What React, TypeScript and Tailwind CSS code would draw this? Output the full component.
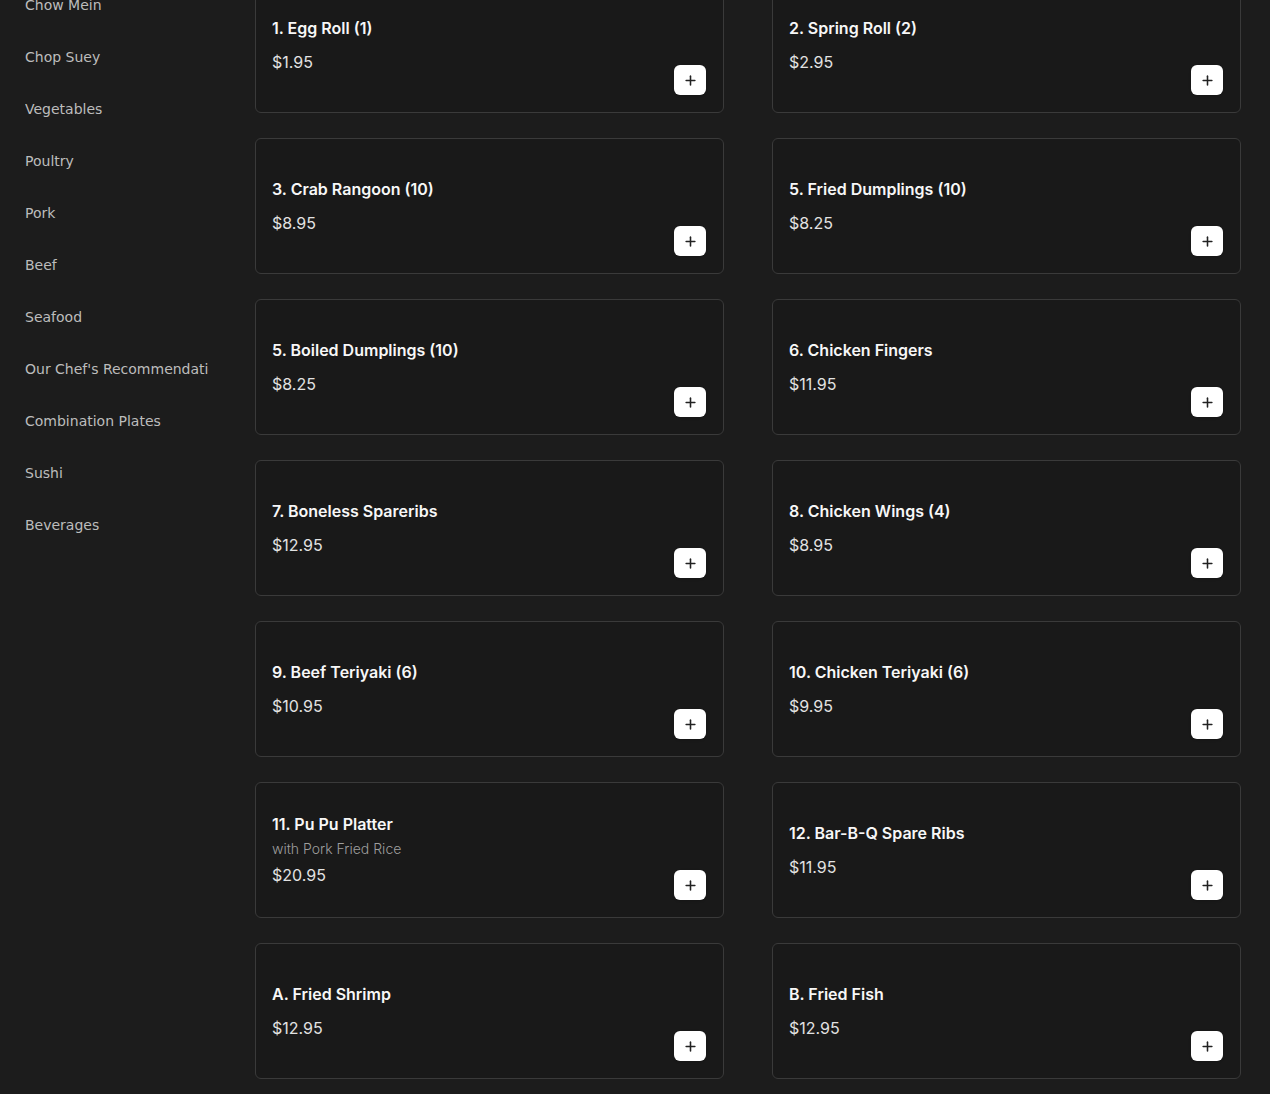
import React from 'react';
import { Plus } from 'lucide-react';

const categories = [
  'Chow Mein',
  'Chop Suey',
  'Vegetables',
  'Poultry',
  'Pork',
  'Beef',
  'Seafood',
  "Our Chef's Recommendations",
  'Combination Plates',
  'Sushi',
  'Beverages',
];

type Item = { name: string; price: string; note?: string };

const items: Item[] = [
  { name: '1. Egg Roll (1)', price: '$1.95' },
  { name: '2. Spring Roll (2)', price: '$2.95' },
  { name: '3. Crab Rangoon (10)', price: '$8.95' },
  { name: '5. Fried Dumplings (10)', price: '$8.25' },
  { name: '5. Boiled Dumplings (10)', price: '$8.25' },
  { name: '6. Chicken Fingers', price: '$11.95' },
  { name: '7. Boneless Spareribs', price: '$12.95' },
  { name: '8. Chicken Wings (4)', price: '$8.95' },
  { name: '9. Beef Teriyaki (6)', price: '$10.95' },
  { name: '10. Chicken Teriyaki (6)', price: '$9.95' },
  { name: '11. Pu Pu Platter', price: '$20.95', note: 'with Pork Fried Rice' },
  { name: '12. Bar-B-Q Spare Ribs', price: '$11.95' },
  { name: 'A. Fried Shrimp', price: '$12.95' },
  { name: 'B. Fried Fish', price: '$12.95' },
];

function MenuCard({ item }: { item: Item }) {
  return (
    <div className="h-[136px] rounded-md border border-[#3a3a3a] bg-[#191919] flex justify-between pl-4 pr-[17px] pt-4 pb-[17px]">
      <div className="self-center flex flex-col">
        <div className="text-base leading-6 font-semibold text-[#f7f7f7]">{item.name}</div>
        {item.note ? (
          <>
            <div className="mt-[3px] text-sm leading-5 font-light text-[#9e9e9e]">{item.note}</div>
            <div className="mt-[4px] text-base leading-6 text-[#e2e2e2]">{item.price}</div>
          </>
        ) : (
          <div className="mt-[10px] text-base leading-6 text-[#e2e2e2]">{item.price}</div>
        )}
      </div>
      <button className="self-end w-8 h-[30px] rounded-md bg-white flex items-center justify-center shadow-sm">
        <Plus size={15} strokeWidth={2.5} className="text-[#222]" />
      </button>
    </div>
  );
}

export default function App() {
  return (
    <div className="h-[1094px] overflow-hidden bg-[#1c1c1c] flex">
      {/* Category sidebar */}
      <aside className="w-[225px] shrink-0 pl-[25px] pr-4 -mt-[21px] font-['DejaVu_Sans',sans-serif]">
        {categories.map((c) => (
          <div key={c} className="py-4 text-sm leading-5 text-[#bcbcbc] whitespace-nowrap overflow-hidden">
            {c}
          </div>
        ))}
      </aside>

      {/* Menu items */}
      <main className="flex-1 pl-[30px] pr-[29px] -mt-[23px] font-['Inter',sans-serif]">
        <div className="grid grid-cols-2 gap-x-[48px] gap-y-[25px]">
          {items.map((item) => (
            <MenuCard key={item.name} item={item} />
          ))}
        </div>
      </main>
    </div>
  );
}
